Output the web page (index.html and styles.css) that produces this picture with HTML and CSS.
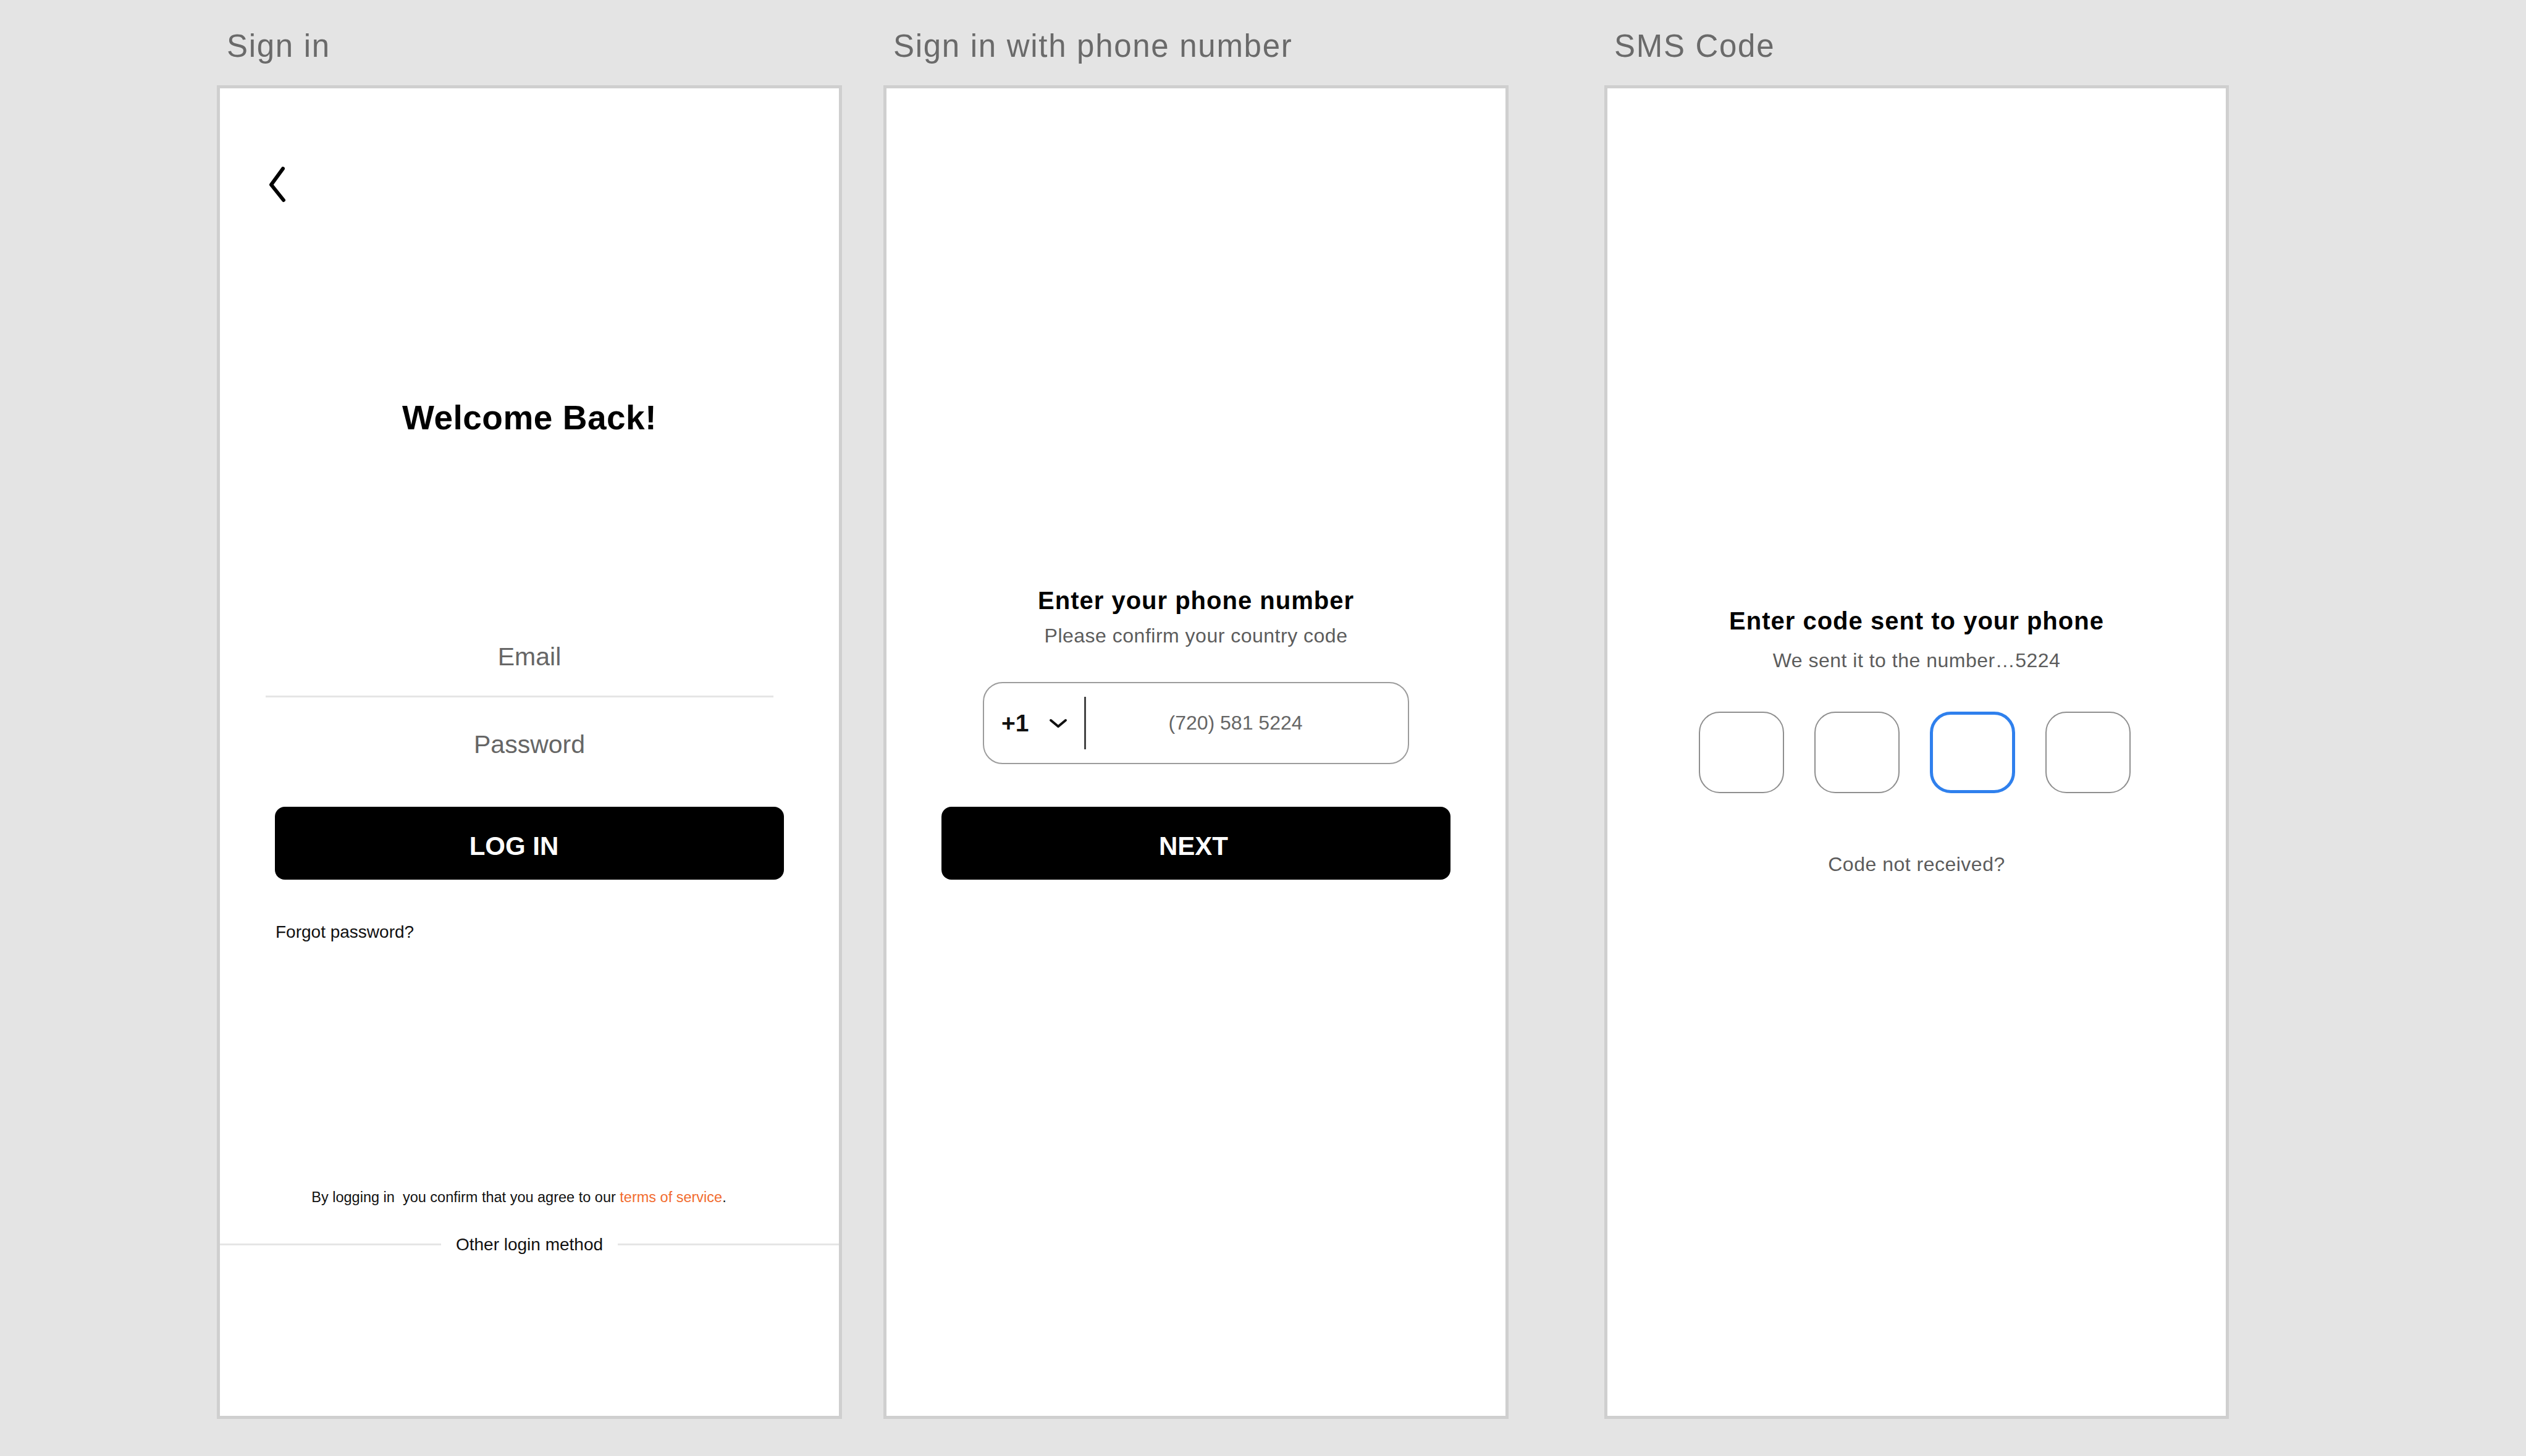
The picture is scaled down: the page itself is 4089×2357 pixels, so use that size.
FILE: index.html
```html
<!DOCTYPE html>
<html lang="en">
<head>
    <meta charset="UTF-8">
    <meta name="viewport" content="width=device-width, initial-scale=1.0">
    <title>Sign in flow</title>
    <link rel="stylesheet" href="styles.css">
</head>
<body>
    <div class="board">

        <!-- Screen 1: email sign in -->
        <section class="column">
            <h2 class="frame-title">Sign in</h2>
            <div class="screen signin">
                <svg class="back" width="32" height="60" viewBox="0 0 32 60">
                    <path d="M24 5 L5 31 L25 56" fill="none" stroke="#000" stroke-width="6" stroke-linecap="round" stroke-linejoin="round"/>
                </svg>
                <h1 class="welcome">Welcome Back!</h1>
                <div class="field email">Email</div>
                <div class="field-line"></div>
                <div class="field password">Password</div>
                <button class="btn login">LOG IN</button>
                <a class="forgot">Forgot password?</a>
                <p class="terms">By logging in&nbsp; you confirm that you agree to our <span class="terms-link">terms of service</span>.</p>
                <div class="other-login"><span>Other login method</span></div>
            </div>
        </section>

        <!-- Screen 2: phone number -->
        <section class="column">
            <h2 class="frame-title">Sign in with phone number</h2>
            <div class="screen phone">
                <h3 class="heading phone-heading">Enter your phone number</h3>
                <p class="subtitle phone-sub">Please confirm your country code</p>
                <div class="phone-input">
                    <span class="country">+1</span>
                    <svg class="caret" width="32" height="16" viewBox="0 0 32 16">
                        <path d="M4 3 L16 13 L28 3" fill="none" stroke="#111" stroke-width="4" stroke-linecap="round" stroke-linejoin="round"/>
                    </svg>
                    <span class="phone-divider"></span>
                    <span class="phone-number">(720) 581 5224</span>
                </div>
                <button class="btn next">NEXT</button>
            </div>
        </section>

        <!-- Screen 3: sms code -->
        <section class="column sms-column">
            <h2 class="frame-title">SMS Code</h2>
            <div class="screen sms">
                <h3 class="heading sms-heading">Enter code sent to your phone</h3>
                <p class="subtitle sms-sub">We sent it to the number…5224</p>
                <div class="code-boxes">
                    <div class="code-box"></div>
                    <div class="code-box"></div>
                    <div class="code-box active"></div>
                    <div class="code-box"></div>
                </div>
                <p class="subtitle resend">Code not received?</p>
            </div>
        </section>

    </div>
</body>
</html>
```

FILE: styles.css
```css
body {
    margin: 0;
    background-color: #e4e4e4;
    font-family: "Liberation Sans", Arial, sans-serif;
}
.board {
    display: flex;
    gap: 67px;
    padding: 49px 0 0 351px;
}
.column {
    display: flex;
    flex-direction: column;
    width: 1012px;
}
.sms-column {
    margin-left: 88px;
    width: 1011px;
}
.frame-title {
    margin: 0 0 38px 16px;
    font-size: 51px;
    line-height: 51px;
    font-weight: normal;
    letter-spacing: 1.7px;
    color: #6a6a6a;
}
.screen {
    box-sizing: border-box;
    height: 2159px;
    background-color: #fff;
    border: 5px solid #cfcfcf;
    display: flex;
    flex-direction: column;
    align-items: center;
    color: #111;
}

/* Sign in */
.back {
    align-self: flex-start;
    margin: 125px 0 0 78px;
}
.welcome {
    margin: 321px 0 0 0;
    font-size: 55px;
    line-height: 54px;
    letter-spacing: 0.5px;
    color: #000;
}
.field {
    font-size: 41px;
    line-height: 41px;
    color: #666;
}
.email { margin-top: 340px; }
.password { margin-top: 56px; }
.field-line {
    align-self: flex-start;
    margin: 42px 0 0 74px;
    width: 822px;
    height: 3px;
    background-color: #e5e5e5;
}
.btn {
    box-sizing: border-box;
    width: 824px;
    height: 118px;
    padding-top: 10px;
    border: none;
    border-radius: 16px;
    background-color: #000;
    color: #fff;
    font-family: "Liberation Sans", Arial, sans-serif;
    font-size: 42px;
    font-weight: bold;
    cursor: pointer;
}
.login {
    margin-top: 80px;
    padding-right: 56px;
}
.forgot {
    align-self: flex-start;
    margin: 71px 0 0 90px;
    font-size: 28px;
    line-height: 28px;
    color: #111;
}
.terms {
    margin: 404px 0 0 0;
    padding-right: 34px;
    font-size: 23.5px;
    line-height: 23.5px;
    color: #111;
}
.terms-link { color: #f26b2d; }
.other-login {
    align-self: stretch;
    display: flex;
    align-items: center;
    margin-top: 50px;
    font-size: 28px;
    line-height: 28px;
    color: #111;
}
.other-login::before,
.other-login::after {
    content: "";
    flex: 1;
    height: 3px;
    background-color: #e5e5e5;
}
.other-login span { padding: 0 24px; }

/* Phone + SMS */
.heading {
    margin: 0;
    font-size: 40px;
    line-height: 40px;
    letter-spacing: 1px;
    color: #000;
}
.subtitle {
    margin: 0;
    font-size: 32px;
    line-height: 32px;
    letter-spacing: 0.5px;
    color: #5c5c5c;
}
.phone-heading { margin-top: 809px; }
.phone-sub { margin-top: 21px; }
.phone-input {
    box-sizing: border-box;
    display: flex;
    align-items: center;
    width: 690px;
    height: 133px;
    margin-top: 59px;
    padding-left: 28px;
    border: 2px solid #9c9c9c;
    border-radius: 32px;
}
.country {
    font-size: 39px;
    font-weight: bold;
    color: #111;
}
.caret { margin-left: 32px; }
.phone-divider {
    width: 3px;
    height: 85px;
    margin-left: 26px;
    background-color: #444;
}
.phone-number {
    margin-left: 133px;
    font-size: 32px;
    color: #666;
}
.next {
    margin-top: 69px;
    padding-right: 14px;
}

.sms-heading { margin-top: 842px; }
.sms-sub { margin-top: 28px; }
.code-boxes {
    display: flex;
    gap: 49px;
    margin: 67px 6px 0 0;
}
.code-box {
    box-sizing: border-box;
    width: 138px;
    height: 132px;
    border: 2px solid #8f8f8f;
    border-radius: 34px;
}
.code-box.active { border: 5px solid #2f80ed; }
.resend { margin-top: 99px; }
```
